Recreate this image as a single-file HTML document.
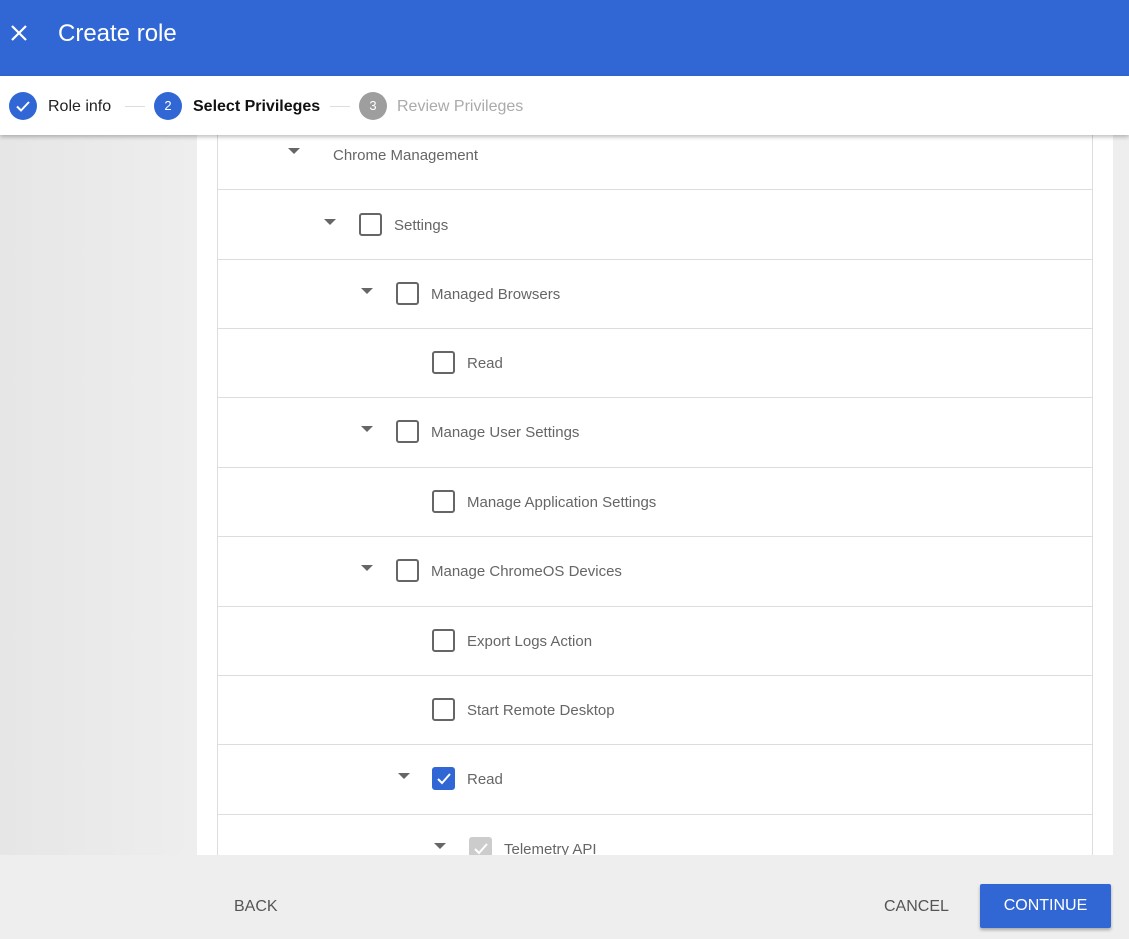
<!DOCTYPE html><html><head><style>
body{margin:0;width:1129px;height:939px;overflow:hidden;background:#eee;font-family:"Liberation Sans",Arial,sans-serif;position:relative}
.hdr{position:absolute;left:0;top:0;width:1129px;height:76px;background:#3167d4;color:#fff}
.hdr .t{position:absolute;left:58px;top:20px;font-size:24px}
.step{position:absolute;left:0;top:76px;width:1129px;height:59px;background:#fff;box-shadow:0 2px 4px rgba(0,0,0,.25);z-index:3;font-size:16px}
.c{position:absolute;top:16px;width:28px;height:28px;border-radius:50%;color:#fff;font-size:13px;text-align:center;line-height:28px}
.st{position:absolute;top:21px}
.ln{position:absolute;top:30px;width:20px;height:1px;background:#ddd}
.left{position:absolute;left:0;top:135px;width:197px;height:720px;background:linear-gradient(90deg,#e6e6e6,#eee)}
.panel{position:absolute;left:197px;top:135px;width:916px;height:720px;background:#fff;overflow:hidden}
.tbl{position:absolute;left:20px;top:-10px;width:874px;border-left:1px solid #ddd;border-right:1px solid #ddd;height:800px}
.row{position:absolute;left:0;width:874px;border-bottom:1px solid #ddd}
.ar{position:absolute;width:0;height:0;border-left:6px solid transparent;border-right:6px solid transparent;border-top:6px solid #666}
.cb{position:absolute;width:23px;height:23px;border:2px solid #666;border-radius:3px;box-sizing:border-box}
.cb.on{background:#3167d4;border-color:#3167d4}
.cb.dis{background:#ccc;border-color:#ccc}
.tx{position:absolute;font-size:15px;color:#666}
.foot{position:absolute;top:855px;left:0;width:1129px;height:84px;font-size:16px;color:#555}
</style></head><body>
<div class="hdr"><svg style="position:absolute;left:10px;top:24px" width="18" height="18" viewBox="0 0 18 18"><path d="M2 2L16 16M16 2L2 16" stroke="#fff" stroke-width="2.2"/></svg><div class="t">Create role</div></div>
<div class="step">
<div class="c" style="left:9px;background:#3167d4"><svg width="28" height="28" viewBox="0 0 28 28"><path d="M8 14.5l4 4 8-8.5" stroke="#fff" stroke-width="2" fill="none"/></svg></div>
<div class="st" style="left:48px;color:#222;top:22px">Role info</div>
<div class="ln" style="left:125px"></div>
<div class="c" style="left:154px;background:#3167d4">2</div>
<div class="st" style="left:193px;color:#111;font-weight:bold;top:22px">Select Privileges</div>
<div class="ln" style="left:330px"></div>
<div class="c" style="left:359px;background:#9e9e9e">3</div>
<div class="st" style="left:397px;color:#aaa;top:22px">Review Privileges</div>
</div>
<div class="left"></div>
<div class="panel"><div class="tbl">
<div class="row" style="top:0;height:64px"><div class="ar" style="left:70px;top:23px"></div><div class="tx" style="left:115px;top:22px">Chrome Management</div></div>
<div class="row" style="top:65px;height:69px"><div class="ar" style="left:106px;top:29px"></div><div class="cb" style="left:141px;top:23px"></div><div class="tx" style="left:176px;top:27px">Settings</div></div>
<div class="row" style="top:135px;height:68px"><div class="ar" style="left:143px;top:28px"></div><div class="cb" style="left:178px;top:22px"></div><div class="tx" style="left:213px;top:26px">Managed Browsers</div></div>
<div class="row" style="top:204px;height:68px"><div class="cb" style="left:214px;top:22px"></div><div class="tx" style="left:249px;top:26px">Read</div></div>
<div class="row" style="top:273px;height:69px"><div class="ar" style="left:143px;top:28px"></div><div class="cb" style="left:178px;top:22px"></div><div class="tx" style="left:213px;top:26px">Manage User Settings</div></div>
<div class="row" style="top:343px;height:68px"><div class="cb" style="left:214px;top:22px"></div><div class="tx" style="left:249px;top:26px">Manage Application Settings</div></div>
<div class="row" style="top:412px;height:69px"><div class="ar" style="left:143px;top:28px"></div><div class="cb" style="left:178px;top:22px"></div><div class="tx" style="left:213px;top:26px">Manage ChromeOS Devices</div></div>
<div class="row" style="top:482px;height:68px"><div class="cb" style="left:214px;top:22px"></div><div class="tx" style="left:249px;top:26px">Export Logs Action</div></div>
<div class="row" style="top:551px;height:68px"><div class="cb" style="left:214px;top:22px"></div><div class="tx" style="left:249px;top:26px">Start Remote Desktop</div></div>
<div class="row" style="top:620px;height:69px"><div class="ar" style="left:180px;top:28px"></div><div class="cb on" style="left:214px;top:22px"><svg style="position:absolute;left:0;top:0" width="20" height="20" viewBox="0 0 20 20"><path d="M4 10l4 4 8-9" stroke="#fff" stroke-width="2" fill="none"/></svg></div><div class="tx" style="left:249px;top:26px">Read</div></div>
<div class="row" style="top:690px;height:69px"><div class="ar" style="left:216px;top:28px"></div><div class="cb dis" style="left:251px;top:22px"><svg style="position:absolute;left:0;top:0" width="20" height="20" viewBox="0 0 20 20"><path d="M4 10l4 4 8-9" stroke="#fff" stroke-width="2" fill="none"/></svg></div><div class="tx" style="left:286px;top:26px">Telemetry API</div></div>
</div></div>
<div class="foot">
<div style="position:absolute;left:234px;top:43px">BACK</div>
<div style="position:absolute;left:884px;top:43px">CANCEL</div>
<div style="position:absolute;left:980px;top:29px;width:131px;height:44px;background:#3167d4;color:#fff;text-align:center;line-height:44px;border-radius:2px;box-shadow:0 2px 3px rgba(0,0,0,.3)">CONTINUE</div>
</div>
</body></html>
